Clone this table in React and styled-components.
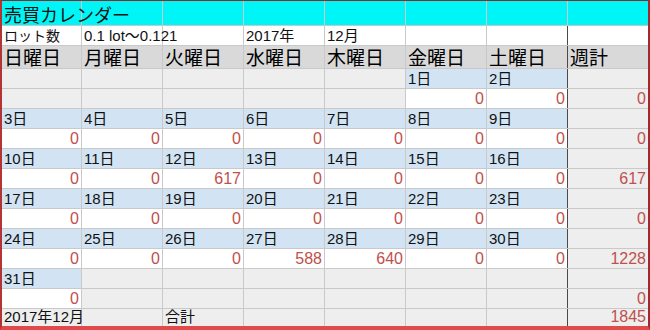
import React from "react";
import styled, { createGlobalStyle, css } from "styled-components";

const Global = createGlobalStyle`
  html, body { margin: 0; padding: 0; background: #ffffff; }
  body { font-family: "Liberation Sans", "Noto Sans CJK JP", sans-serif; }
`;

const Frame = styled.div`
  width: 650px;
  height: 330px;
  box-sizing: border-box;
  border-top: 1px solid #8e2a2a;
  border-left: 2px solid #b23434;
  border-right: 2px solid #a02a2a;
  border-bottom: 4px solid #e04a4a;
  background: #c9c9c9;
  overflow: hidden;
`;

const Sheet = styled.div`
  display: grid;
  grid-template-columns: 79px repeat(7, 80px);
  grid-template-rows: 24px 19px 22px repeat(12, 19px) 17px;
  gap: 1px;
  background: #c9c9c9;
`;

const bgs = {
  title: "#00f6f6",
  white: "#ffffff",
  head: "#d9d9d9",
  empty: "#eeeeee",
  date: "#d2e4f3",
  value: "#ffffff",
};

const Cell = styled.div`
  position: relative;
  display: flex;
  align-items: flex-end;
  justify-content: ${(p) => (p.$right ? "flex-end" : "flex-start")};
  padding: 0 ${(p) => (p.$right ? "2px" : "0")} 0 ${(p) => (p.$right ? "0" : "2px")};
  background: ${(p) => bgs[p.$bg] || "#eeeeee"};
  white-space: nowrap;
  overflow: visible;
  z-index: ${(p) => (p.$over ? 2 : 1)};
  ${(p) =>
    p.$total &&
    css`
      box-shadow: -1px 0 0 #4a4a4a;
    `}
`;

const Title = styled.span`
  font-family: "Noto Sans CJK JP", sans-serif;
  font-size: 18px;
  line-height: 22px;
  color: #111;
`;

const Small = styled.span`
  font-family: "Liberation Sans", "Noto Sans CJK JP", sans-serif;
  font-size: ${(p) => p.$size || 15}px;
  line-height: 18px;
  color: #111;
`;

const DayName = styled.span`
  font-family: "Noto Sans CJK JP", sans-serif;
  font-size: 19px;
  font-weight: 400;
  line-height: 22px;
  color: #000;
`;

const DateLabel = styled.span`
  font-family: "Liberation Sans", "Noto Sans CJK JP", sans-serif;
  font-size: 15px;
  line-height: 18px;
  color: #111;
`;

const Num = styled.span`
  font-family: "Liberation Sans", sans-serif;
  font-size: 16px;
  line-height: 18px;
  color: #c0504d;
`;

const days = ["日曜日", "月曜日", "火曜日", "水曜日", "木曜日", "金曜日", "土曜日"];

const weeks = [
  { dates: [null, null, null, null, null, 1, 2], values: [null, null, null, null, null, 0, 0], total: 0 },
  { dates: [3, 4, 5, 6, 7, 8, 9], values: [0, 0, 0, 0, 0, 0, 0], total: 0 },
  { dates: [10, 11, 12, 13, 14, 15, 16], values: [0, 0, 617, 0, 0, 0, 0], total: 617 },
  { dates: [17, 18, 19, 20, 21, 22, 23], values: [0, 0, 0, 0, 0, 0, 0], total: 0 },
  { dates: [24, 25, 26, 27, 28, 29, 30], values: [0, 0, 0, 588, 640, 0, 0], total: 1228 },
  { dates: [31, null, null, null, null, null, null], values: [0, null, null, null, null, null, null], total: 0 },
];

export default function App() {
  const cells = [];
  cells.push(
    <Cell key="t0" $bg="title" $over>
      <Title>売買カレンダー</Title>
    </Cell>
  );
  for (let i = 1; i < 8; i++) cells.push(<Cell key={"t" + i} $bg="title" />);

  const info = ["ロット数", "0.1 lot～0.121", "", "2017年", "12月", "", "", ""];
  info.forEach((t, i) =>
    cells.push(
      <Cell key={"i" + i} $bg="white" $over={i === 1} $total={i === 7}>
        {t && <Small $size={i === 0 ? 14 : 15}>{t}</Small>}
      </Cell>
    )
  );

  days.forEach((d, i) =>
    cells.push(
      <Cell key={"h" + i} $bg="head">
        <DayName>{d}</DayName>
      </Cell>
    )
  );
  cells.push(
    <Cell key="h7" $bg="head" $total>
      <DayName>週計</DayName>
    </Cell>
  );

  weeks.forEach((w, wi) => {
    w.dates.forEach((d, i) =>
      cells.push(
        <Cell key={`d${wi}-${i}`} $bg={d == null ? "empty" : "date"}>
          {d != null && <DateLabel>{d}日</DateLabel>}
        </Cell>
      )
    );
    cells.push(<Cell key={`d${wi}-7`} $bg="empty" $total />);
    w.values.forEach((v, i) =>
      cells.push(
        <Cell key={`v${wi}-${i}`} $bg={v == null ? "empty" : "value"} $right>
          {v != null && <Num>{v}</Num>}
        </Cell>
      )
    );
    cells.push(
      <Cell key={`v${wi}-7`} $bg="empty" $right $total>
        <Num>{w.total}</Num>
      </Cell>
    );
  });

  const bottom = ["2017年12月", "", "合計", "", "", "", ""];
  bottom.forEach((t, i) =>
    cells.push(
      <Cell key={"b" + i} $bg="empty" $over={i === 0}>
        {t && <Small $size={15}>{t}</Small>}
      </Cell>
    )
  );
  cells.push(
    <Cell key="b7" $bg="empty" $right $total>
      <Num>1845</Num>
    </Cell>
  );

  return (
    <>
      <Global />
      <Frame>
        <Sheet>{cells}</Sheet>
      </Frame>
    </>
  );
}
